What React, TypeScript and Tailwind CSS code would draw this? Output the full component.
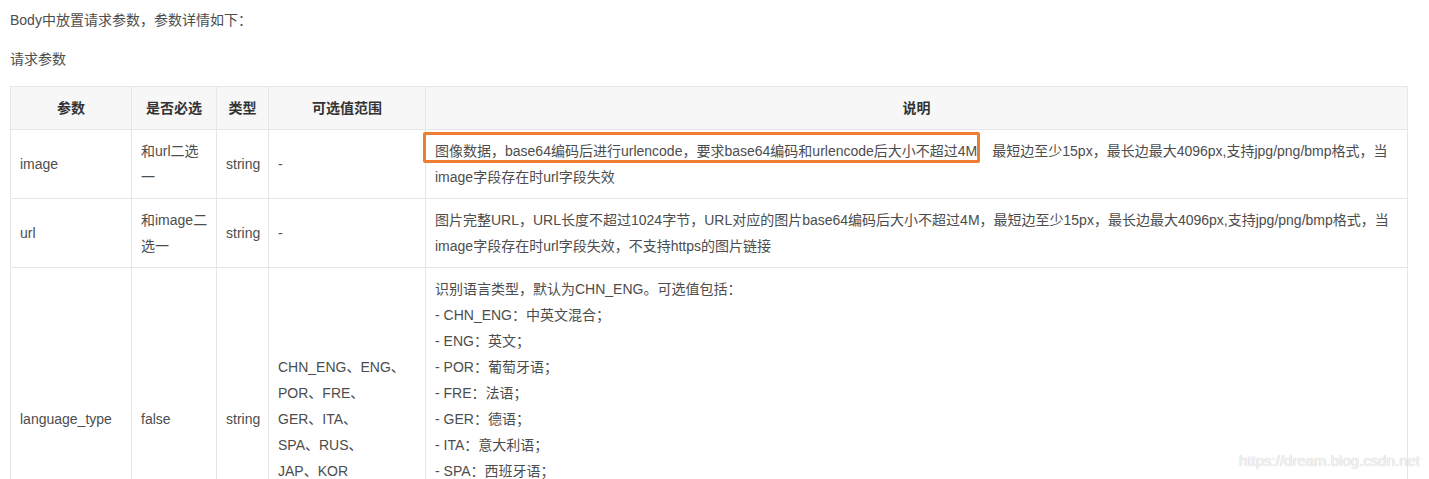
import React from "react";

const cell = "border-r border-b border-[#e6e6e6] px-[9px] py-2 flex items-center";

type Row = {
  name: string;
  required: string[];
  type: string;
  range: string[];
  desc: React.ReactNode[];
  mark?: boolean;
};

const rows: Row[] = [
  {
    name: "image",
    required: ["和url二选", "一"],
    type: "string",
    range: ["-"],
    desc: [
      <>
        图像数据，base64编码后进行urlencode，要求base64编码和urlencode后大小不超过4M
        <span className="inline-block w-[15px]" />
        最短边至少15px，最长边最大4096px,支持jpg/png/bmp格式，当
      </>,
      "image字段存在时url字段失效",
    ],
    mark: true,
  },
  {
    name: "url",
    required: ["和image二", "选一"],
    type: "string",
    range: ["-"],
    desc: [
      "图片完整URL，URL长度不超过1024字节，URL对应的图片base64编码后大小不超过4M，最短边至少15px，最长边最大4096px,支持jpg/png/bmp格式，当",
      "image字段存在时url字段失效，不支持https的图片链接",
    ],
  },
  {
    name: "language_type",
    required: ["false"],
    type: "string",
    range: ["CHN_ENG、ENG、", "POR、FRE、", "GER、ITA、", "SPA、RUS、", "JAP、KOR"],
    desc: [
      "识别语言类型，默认为CHN_ENG。可选值包括：",
      "- CHN_ENG：中英文混合；",
      "- ENG：英文；",
      "- POR：葡萄牙语；",
      "- FRE：法语；",
      "- GER：德语；",
      "- ITA：意大利语；",
      "- SPA：西班牙语；",
      "- RUS：俄语；",
      "- JAP：日语；",
      "- KOR：韩语；",
    ],
  },
];

const Lines = ({ lines }: { lines: React.ReactNode[] }) => (
  <div className="whitespace-nowrap">
    {lines.map((l, i) => (
      <div key={i}>{l}</div>
    ))}
  </div>
);

const App = () => {
  return (
    <div className="relative h-[479px] overflow-hidden bg-white text-[14px] leading-[26px] text-[#4d4d4d] font-[family-name:'Liberation_Sans','Noto_Sans_CJK_SC',sans-serif]">
      <div className="pt-[7px] px-[10px]">
        <p>Body中放置请求参数，参数详情如下：</p>
        <p className="mt-[13px]">请求参数</p>
      </div>

      <div className="mt-[14px] ml-[10px] w-[1398px] grid grid-cols-[121px_85px_52px_157px_982px] border-t border-l border-[#e6e6e6]">
        {["参数", "是否必选", "类型", "可选值范围", "说明"].map((h) => (
          <div key={h} className={`${cell} justify-center bg-[#f7f7f7] font-bold text-[#333]`}>
            {h}
          </div>
        ))}

        {rows.map((r) => (
          <React.Fragment key={r.name}>
            <div className={cell}>{r.name}</div>
            <div className={cell}>
              <Lines lines={r.required} />
            </div>
            <div className={cell}>{r.type}</div>
            <div className={cell}>
              <Lines lines={r.range} />
            </div>
            <div className={`${cell} relative`}>
              <Lines lines={r.desc} />
              {r.mark && (
                <div className="absolute left-[-3px] top-[2px] w-[557px] h-[31px] border-[3px] border-[#ef7d2f] rounded-[2px] pointer-events-none" />
              )}
            </div>
          </React.Fragment>
        ))}
      </div>

      <div className="absolute right-[9px] top-[450px] text-[15px] leading-[22px] text-[#f4f4f4] [text-shadow:0_0_1px_#b8b8b8] font-[family-name:'Liberation_Sans',sans-serif]">
        https://dream.blog.csdn.net
      </div>
    </div>
  );
};

export default App;
